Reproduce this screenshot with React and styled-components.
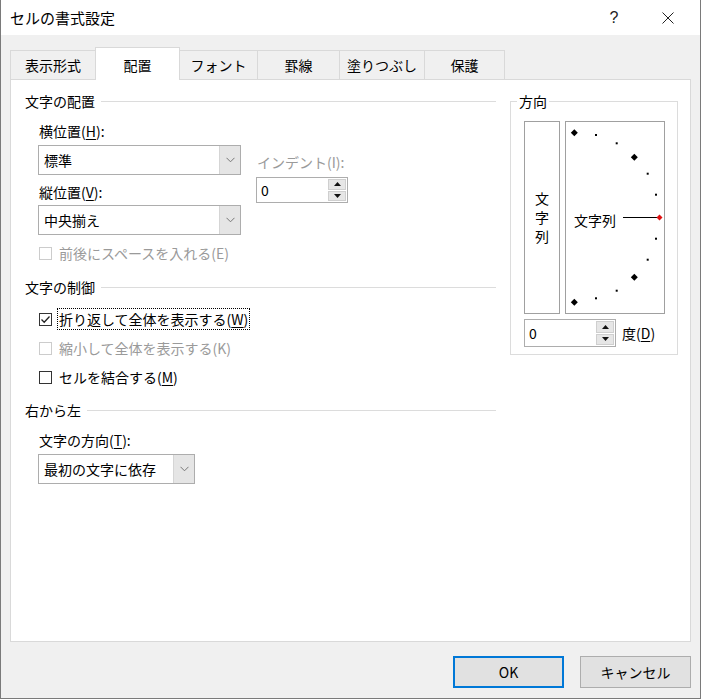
import React from "react";
import styled, { createGlobalStyle, css } from "styled-components";

const GlobalStyle = createGlobalStyle`
  body {
    margin: 0;
    background: #ffffff;
    font-family: "Noto Sans CJK JP", "Noto Sans", sans-serif;
    color: #1a1a1a;
  }
`;

const Window = styled.div`
  width: 701px;
  height: 699px;
  box-sizing: border-box;
  border: 1px solid #7a7a7a;
  border-top: none;
  background: #f0f0f0;
  display: flex;
  flex-direction: column;
  font-size: 14px;
  line-height: 20px;
`;

const TitleBar = styled.div`
  height: 35px;
  background: #ffffff;
  display: flex;
  align-items: center;
  padding-left: 9px;
  padding-right: 9px;
`;

const Title = styled.div`
  flex: 1;
  font-size: 15px;
  color: #000;
`;

const TitleButton = styled.div`
  width: 46px;
  height: 35px;
  display: flex;
  align-items: center;
  justify-content: center;
  font-size: 16px;
  font-family: "Liberation Sans", sans-serif;
  color: #222;
  & + & {
    margin-left: 8px;
  }
`;

const Body = styled.div`
  flex: 1;
  display: flex;
  flex-direction: column;
  padding: 0 9px;
`;

const TabRow = styled.div`
  margin-top: 12px;
  height: 32px;
  display: flex;
  align-items: flex-end;
`;

const Tab = styled.div`
  width: ${(p) => p.$w}px;
  height: 29px;
  box-sizing: border-box;
  border: 1px solid #d9d9d9;
  border-bottom: none;
  margin-right: -1px;
  display: flex;
  align-items: center;
  justify-content: center;
  background: #f0f0f0;
  color: #000;
  ${(p) =>
    p.$active &&
    css`
      height: 33px;
      margin-bottom: -1px;
      background: #ffffff;
      position: relative;
      z-index: 1;
      padding-top: 1px;
    `}
`;

const Panel = styled.div`
  height: 563px;
  box-sizing: border-box;
  background: #ffffff;
  border: 1px solid #d9d9d9;
  display: flex;
  padding: 11px 0 0 14px;
`;

const LeftCol = styled.div`
  width: 471px;
  display: flex;
  flex-direction: column;
`;

const SectionHeader = styled.div`
  height: 20px;
  display: flex;
  align-items: center;
  margin-top: ${(p) => p.$mt || 0}px;
  color: #000;
  &::after {
    content: "";
    flex: 1;
    margin-left: 6px;
    border-top: 1px solid #dcdcdc;
  }
`;

const Indented = styled.div`
  padding-left: 13px;
  display: flex;
  flex-direction: column;
`;

const Label = styled.div`
  height: 20px;
  margin-top: ${(p) => p.$mt || 0}px;
  padding-left: 1px;
  color: ${(p) => (p.$disabled ? "#9a9a9a" : "#000")};
  white-space: nowrap;
`;

const Key = styled.span`
  text-decoration: underline;
  text-underline-offset: 2px;
`;

const FieldRow = styled.div`
  display: flex;
  margin-top: ${(p) => p.$mt || 0}px;
`;

const FieldCol = styled.div`
  display: flex;
  flex-direction: column;
  margin-left: ${(p) => p.$ml || 0}px;
  padding-top: ${(p) => p.$pt || 0}px;
`;

const SelectBox = styled.div`
  width: ${(p) => p.$w}px;
  height: 30px;
  box-sizing: border-box;
  border: 1px solid #adadad;
  background: #ffffff;
  display: flex;
  margin-top: ${(p) => p.$mt || 0}px;
`;

const SelectText = styled.div`
  flex: 1;
  padding-left: 5px;
  display: flex;
  align-items: center;
  color: #000;
`;

const SelectArrow = styled.div`
  width: 20px;
  background: #e5e5e5;
  border-left: 1px solid #d5d5d5;
  display: flex;
  align-items: center;
  justify-content: center;
`;

const SpinBox = styled.div`
  width: ${(p) => p.$w}px;
  height: ${(p) => p.$h}px;
  box-sizing: border-box;
  border: 1px solid #adadad;
  background: #ffffff;
  display: flex;
  margin-top: ${(p) => p.$mt || 0}px;
`;

const SpinText = styled.div`
  flex: 1;
  padding-left: 4px;
  display: flex;
  align-items: center;
  color: #000;
`;

const SpinButtons = styled.div`
  width: 18px;
  padding: 1px 1px 1px 0;
  display: flex;
  flex-direction: column;
  gap: 1px;
`;

const SpinButton = styled.div`
  flex: 1;
  background: #e6e6e6;
  border: 1px solid #cfcfcf;
  display: flex;
  align-items: center;
  justify-content: center;
`;

const CheckRow = styled.div`
  height: 20px;
  display: flex;
  align-items: center;
  margin-top: ${(p) => p.$mt || 0}px;
  padding-left: 1px;
  color: ${(p) => (p.$disabled ? "#9a9a9a" : "#000")};
`;

const Box = styled.div`
  width: 13px;
  height: 13px;
  box-sizing: border-box;
  border: 1px solid ${(p) => (p.$disabled ? "#cccccc" : "#333333")};
  background: #ffffff;
  margin-right: 6px;
  display: flex;
  align-items: center;
  justify-content: center;
`;

const CheckText = styled.span`
  white-space: nowrap;
  padding: 0 1px;
  ${(p) =>
    p.$focus &&
    css`
      outline: 1px dotted #000;
      outline-offset: 0;
    `}
`;

const Group = styled.div`
  position: relative;
  width: 168px;
  height: 254px;
  box-sizing: border-box;
  border: 1px solid #dcdcdc;
  margin: 10px 0 0 14px;
  padding: 19px 0 0 13px;
`;

const Legend = styled.div`
  position: absolute;
  top: -11px;
  left: 6px;
  padding: 0 2px;
  background: #ffffff;
  color: #000;
`;

const OrientRow = styled.div`
  display: flex;
  gap: 5px;
`;

const VertBox = styled.div`
  width: 36px;
  height: 193px;
  box-sizing: border-box;
  border: 1px solid #a0a0a0;
  display: flex;
  flex-direction: column;
  align-items: center;
  justify-content: center;
  line-height: 19px;
  color: #000;
  padding-bottom: 1px;
`;

const Dial = styled.div`
  width: 100px;
  height: 193px;
  box-sizing: border-box;
  border: 1px solid #a0a0a0;
`;

const AngleRow = styled.div`
  display: flex;
  align-items: center;
  margin-top: 5px;
`;

const AngleLabel = styled.div`
  margin-left: 6px;
  color: #000;
`;

const Footer = styled.div`
  display: flex;
  justify-content: flex-end;
  gap: 16px;
  padding-top: 14px;
`;

const Button = styled.div`
  width: 111px;
  height: 32px;
  box-sizing: border-box;
  background: #e1e1e1;
  border: ${(p) => (p.$primary ? "2px solid #0078d7" : "1px solid #adadad")};
  display: flex;
  align-items: center;
  justify-content: center;
  color: #000;
`;

const Chevron = () => (
  <svg width="9" height="6" viewBox="0 0 9 6">
    <polyline points="0.5,0.8 4.5,4.8 8.5,0.8" fill="none" stroke="#777" strokeWidth="1" />
  </svg>
);

const Tri = ({ up }) => (
  <svg width="7" height="4" viewBox="0 0 7 4">
    <polygon points={up ? "0,4 3.5,0 7,4" : "0,0 3.5,4 7,0"} fill="#111" />
  </svg>
);

const Select = ({ w, mt, children }) => (
  <SelectBox $w={w} $mt={mt}>
    <SelectText>{children}</SelectText>
    <SelectArrow>
      <Chevron />
    </SelectArrow>
  </SelectBox>
);

const Spinner = ({ w, h, mt, value }) => (
  <SpinBox $w={w} $h={h} $mt={mt}>
    <SpinText>{value}</SpinText>
    <SpinButtons>
      <SpinButton>
        <Tri up />
      </SpinButton>
      <SpinButton>
        <Tri />
      </SpinButton>
    </SpinButtons>
  </SpinBox>
);

const Check = ({ checked, disabled, focus, mt, children }) => (
  <CheckRow $disabled={disabled} $mt={mt}>
    <Box $disabled={disabled}>
      {checked && (
        <svg width="11" height="11" viewBox="0 0 11 11">
          <polyline points="1.5,5.5 4.2,8.3 9.5,2.5" fill="none" stroke="#222" strokeWidth="1.3" />
        </svg>
      )}
    </Box>
    <CheckText $focus={focus}>{children}</CheckText>
  </CheckRow>
);

const diamonds = [
  [8.3, 10.7],
  [68.3, 35.3],
  [68.3, 155.3],
  [8.3, 180.3],
];
const dots = [
  [30, 13],
  [50.7, 21.3],
  [81.7, 51.7],
  [90, 72.7],
  [90, 116.7],
  [81.7, 137.7],
  [50.7, 168.7],
  [30, 176.3],
];

const diamond = (x, y, r) => `${x},${y - r} ${x + r},${y} ${x},${y + r} ${x - r},${y}`;

const DialDrawing = () => (
  <svg width="98" height="191" viewBox="0 0 98 191">
    {diamonds.map(([x, y], i) => (
      <polygon key={i} points={diamond(x, y, 3.5)} fill="#000" />
    ))}
    {dots.map(([x, y], i) => (
      <rect key={i} x={x - 1} y={y - 1} width="2" height="2" fill="#000" />
    ))}
    <line x1="57" y1="95.5" x2="91" y2="95.5" stroke="#000" strokeWidth="1" />
    <polygon points={diamond(93.5, 95.5, 3)} fill="#e01010" />
    <text
      x="8"
      y="104"
      fontSize="14"
      fill="#000"
      fontFamily='"Noto Sans CJK JP", sans-serif'
    >
      文字列
    </text>
  </svg>
);

const tabs = [
  ["表示形式", 86],
  ["配置", 85],
  ["フォント", 79],
  ["罫線", 83],
  ["塗りつぶし", 86],
  ["保護", 81],
];

export default function App() {
  return (
    <>
      <GlobalStyle />
      <Window>
        <TitleBar>
          <Title>セルの書式設定</Title>
          <TitleButton>?</TitleButton>
          <TitleButton>
            <svg width="12" height="12" viewBox="0 0 12 12">
              <path d="M0.5 0.5 L11.5 11.5 M11.5 0.5 L0.5 11.5" stroke="#222" strokeWidth="1" />
            </svg>
          </TitleButton>
        </TitleBar>
        <Body>
          <TabRow>
            {tabs.map(([name, w]) => (
              <Tab key={name} $w={w} $active={name === "配置"}>
                {name}
              </Tab>
            ))}
          </TabRow>
          <Panel>
            <LeftCol>
              <SectionHeader>文字の配置</SectionHeader>
              <Indented>
                <Label $mt={10}>
                  横位置(<Key>H</Key>):
                </Label>
                <FieldRow $mt={4}>
                  <FieldCol>
                    <Select w={203}>標準</Select>
                    <Label $mt={7}>
                      縦位置(<Key>V</Key>):
                    </Label>
                    <Select w={203} mt={3}>
                      中央揃え
                    </Select>
                  </FieldCol>
                  <FieldCol $ml={15} $pt={7}>
                    <Label $disabled>インデント(I):</Label>
                    <Spinner w={92} h={26} mt={5} value="0" />
                  </FieldCol>
                </FieldRow>
                <Check disabled mt={8}>
                  前後にスペースを入れる(E)
                </Check>
              </Indented>
              <SectionHeader $mt={14}>文字の制御</SectionHeader>
              <Indented>
                <Check checked focus mt={12}>
                  折り返して全体を表示する(<Key>W</Key>)
                </Check>
                <Check disabled mt={9}>
                  縮小して全体を表示する(K)
                </Check>
                <Check mt={9}>
                  セルを結合する(<Key>M</Key>)
                </Check>
              </Indented>
              <SectionHeader $mt={13}>右から左</SectionHeader>
              <Indented>
                <Label $mt={10}>
                  文字の方向(<Key>T</Key>):
                </Label>
                <Select w={157} mt={4}>
                  最初の文字に依存
                </Select>
              </Indented>
            </LeftCol>
            <Group>
              <Legend>方向</Legend>
              <OrientRow>
                <VertBox>
                  <span>文</span>
                  <span>字</span>
                  <span>列</span>
                </VertBox>
                <Dial>
                  <DialDrawing />
                </Dial>
              </OrientRow>
              <AngleRow>
                <Spinner w={92} h={28} value="0" />
                <AngleLabel>
                  度(<Key>D</Key>)
                </AngleLabel>
              </AngleRow>
            </Group>
          </Panel>
          <Footer>
            <Button $primary>OK</Button>
            <Button>キャンセル</Button>
          </Footer>
        </Body>
      </Window>
    </>
  );
}
